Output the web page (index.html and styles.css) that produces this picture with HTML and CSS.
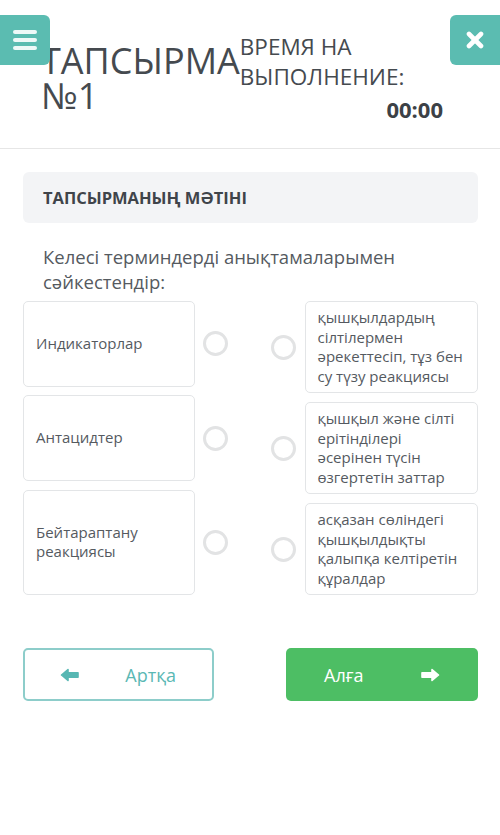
FILE: index.html
```html
<!DOCTYPE html>
<html lang="kk">
<head>
<meta charset="utf-8">
<title>Тапсырма №1</title>
<link rel="stylesheet" href="styles.css">
</head>
<body>
<header class="header">
  <button class="icon-btn menu-btn" aria-label="Меню">
    <svg width="24" height="20" viewBox="0 0 24 20"><g stroke="#eef9f8" stroke-width="4" stroke-linecap="round"><line x1="2" y1="2" x2="22" y2="2"/><line x1="2" y1="10" x2="22" y2="10"/><line x1="2" y1="18" x2="22" y2="18"/></g></svg>
  </button>
  <h1 class="title">ТАПСЫРМА<br>№1</h1>
  <div class="timer">
    <div class="timer-label">ВРЕМЯ НА<br>ВЫПОЛНЕНИЕ:</div>
    <div class="timer-value">00:00</div>
  </div>
  <button class="icon-btn close-btn" aria-label="Жабу">
    <svg width="18" height="18" viewBox="0 0 18 18"><g stroke="#ffffff" stroke-width="4.6" stroke-linecap="round"><line x1="3" y1="3" x2="15" y2="15"/><line x1="15" y1="3" x2="3" y2="15"/></g></svg>
  </button>
</header>

<main class="content">
  <div class="section-head">ТАПСЫРМАНЫҢ МӘТІНІ</div>
  <p class="instruction">Келесі терминдерді анықтамаларымен сәйкестендір:</p>

  <div class="match">
    <div class="col col-left">
      <div class="row">
        <div class="card card-term">Индикаторлар</div>
        <span class="dot"></span>
      </div>
      <div class="row">
        <div class="card card-term">Антацидтер</div>
        <span class="dot"></span>
      </div>
      <div class="row">
        <div class="card card-term">Бейтараптану реакциясы</div>
        <span class="dot"></span>
      </div>
    </div>
    <div class="col col-right">
      <div class="row">
        <span class="dot"></span>
        <div class="card card-def">қышқылдардың сілтілермен әрекеттесіп, тұз бен су түзу реакциясы</div>
      </div>
      <div class="row">
        <span class="dot"></span>
        <div class="card card-def">қышқыл және сілті ерітінділері әсерінен түсін өзгертетін заттар</div>
      </div>
      <div class="row">
        <span class="dot"></span>
        <div class="card card-def">асқазан сөліндегі қышқылдықты қалыпқа келтіретін құралдар</div>
      </div>
    </div>
  </div>

  <div class="nav">
    <button class="nav-btn back">
      <svg width="20" height="14" viewBox="0 0 20 14"><path d="M8 1.5 L1.5 7 L8 12.5 L8 9.3 L18 9.3 L18 4.7 L8 4.7 Z" fill="#57b7b3" stroke="#57b7b3" stroke-width="1.6" stroke-linejoin="round"/></svg>
      <span>Артқа</span>
    </button>
    <button class="nav-btn next">
      <span>Алға</span>
      <svg width="20" height="14" viewBox="0 0 20 14"><path d="M12 1.5 L18.5 7 L12 12.5 L12 9.3 L2 9.3 L2 4.7 L12 4.7 Z" fill="#ffffff" stroke="#ffffff" stroke-width="1.6" stroke-linejoin="round"/></svg>
    </button>
  </div>
</main>
</body>
</html>
```

FILE: styles.css
```css
* {
  box-sizing: border-box;
}

body {
  margin: 0;
  background: #ffffff;
  font-family: "Open Sans", "Noto Sans", "DejaVu Sans", sans-serif;
  color: #444444;
}

.header {
  position: relative;
  height: 149px;
  border-bottom: 1px solid #e6e6e6;
  display: flex;
  align-items: flex-start;
  padding: 32px 57px 0 41px;
}

.icon-btn {
  position: absolute;
  top: 15px;
  width: 50px;
  height: 50px;
  border: none;
  padding: 0;
  background: #5bbcb1;
  display: flex;
  align-items: center;
  justify-content: center;
  z-index: 2;
}

.menu-btn {
  left: 0;
  border-radius: 0 6px 6px 0;
}

.close-btn {
  right: 0;
  border-radius: 6px 0 0 6px;
}

.title {
  margin: 11px 0 0;
  font-size: 36px;
  line-height: 35px;
  font-weight: 400;
  color: #454a4f;
}

.timer {
  flex: 1;
  color: #454a4f;
}

.timer-label {
  font-size: 22.5px;
  line-height: 30px;
}

.timer-value {
  margin-top: 2px;
  text-align: right;
  font-size: 22px;
  line-height: 30px;
  font-weight: 700;
  color: #3c4146;
}

.content {
  padding: 23px 22px 0 23px;
}

.section-head {
  height: 51px;
  display: flex;
  align-items: center;
  padding-left: 20px;
  background: #f3f4f6;
  border-radius: 6px;
  font-size: 16.5px;
  font-weight: 700;
  color: #3f444a;
}

.instruction {
  margin: 21px 0 0;
  padding-left: 20px;
  font-size: 18.5px;
  line-height: 25px;
  color: #555a5f;
}

.match {
  margin-top: 7px;
  display: flex;
  justify-content: space-between;
  align-items: stretch;
}

.col {
  display: flex;
  flex-direction: column;
}

.col-left {
  width: 205px;
  gap: 8.5px;
}

.col-right {
  width: 207px;
  gap: 9px;
}

.row {
  flex: 1 1 auto;
  display: flex;
  align-items: center;
  gap: 8.5px;
}

.card {
  align-self: stretch;
  border: 1px solid #e3e5e7;
  border-radius: 5px;
  background: #ffffff;
  font-size: 15px;
  color: #555a5f;
}

.card-term {
  width: 172px;
  display: flex;
  align-items: center;
  padding: 12px 12px;
  line-height: 19.5px;
}

.card-def {
  width: 173px;
  padding: 6px 10px 6px 12px;
  line-height: 19.5px;
}

.dot {
  flex: none;
  width: 25px;
  height: 25px;
  border: 3px solid #e2e3e4;
  border-radius: 50%;
}

.nav {
  margin-top: 53px;
  display: flex;
  justify-content: space-between;
}

.nav-btn {
  height: 53px;
  border-radius: 5px;
  display: flex;
  align-items: center;
  justify-content: space-between;
  font-family: "Open Sans", "Noto Sans", sans-serif;
  font-size: 18px;
}

.back {
  width: 191px;
  padding: 0 36px 0 35px;
  background: #ffffff;
  border: 2px solid #8dcdca;
  color: #5ab8b4;
}

.next {
  width: 192px;
  padding: 0 38px;
  background: #4dbe64;
  border: none;
  color: #ffffff;
}
```
